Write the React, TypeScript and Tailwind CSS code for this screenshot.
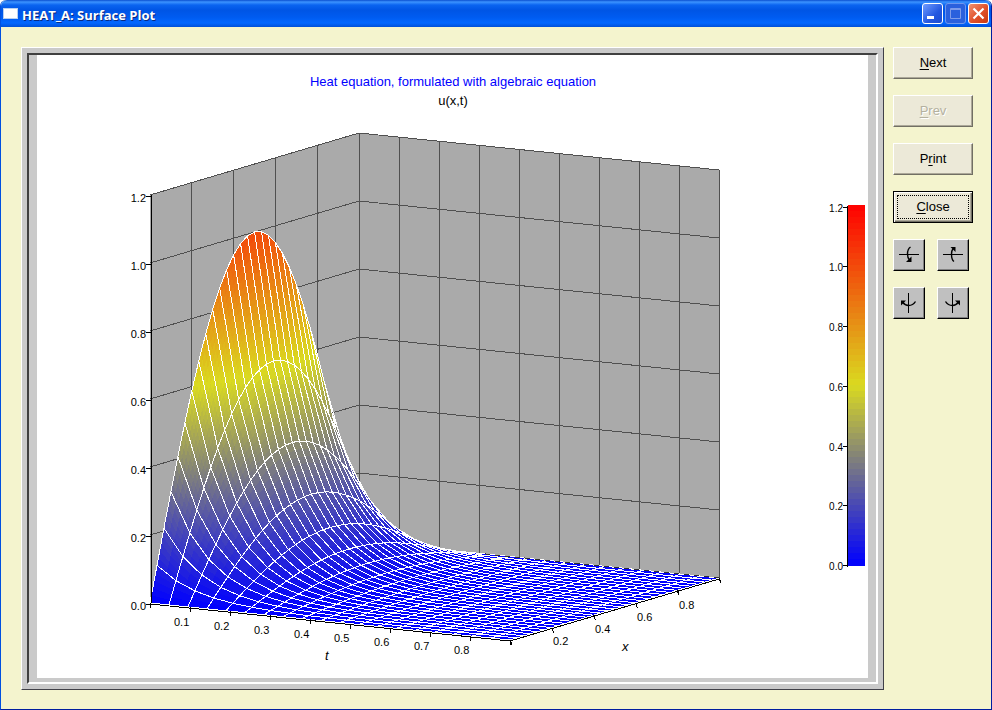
import React from "react";

type Point = [number, number];

const ORIGIN: Point = [113, 548];
const T_AXIS: Point = [360, 37];
const X_AXIS: Point = [209, -62];
const UNIT_HEIGHT = 340;
const Z_MAX = 1.2;
const T_MAX = 0.9;
const T_STEPS = 19;
const X_STEPS = 30;

const BLUE = [0, 0, 255];
const YELLOW = [218, 218, 32];
const RED = [255, 0, 0];

function project(t: number, x: number, z: number): Point {
  return [
    ORIGIN[0] + T_AXIS[0] * t + X_AXIS[0] * x,
    ORIGIN[1] + T_AXIS[1] * t + X_AXIS[1] * x - UNIT_HEIGHT * z,
  ];
}

function heat(t: number, x: number) {
  return Math.exp(-Math.PI * Math.PI * t * T_MAX) * Math.sin(Math.PI * x);
}

function surface(t: number, x: number): Point {
  return project(t, x, heat(t, x));
}

function colour(z: number) {
  const v = Math.min(1, Math.max(0, z / Z_MAX));
  const [from, to, f] = v < 0.5 ? [BLUE, YELLOW, v * 2] : [YELLOW, RED, v * 2 - 1];
  return `rgb(${from.map((c, i) => Math.round(c + (to[i] - c) * f)).join(",")})`;
}

function pts(list: Point[]) {
  return list.map(([a, b]) => `${a.toFixed(2)},${b.toFixed(2)}`).join(" ");
}

function range(n: number) {
  return Array.from({ length: n }, (_, i) => i);
}

function Cell({ t0, t1, x0, x1 }: { t0: number; t1: number; x0: number; x1: number }) {
  const nt = Math.max(1, Math.ceil(Math.abs(heat(t0, x0) - heat(t1, x0)) * 50));
  const nx = Math.max(1, Math.ceil(Math.abs(heat(t0, x0) - heat(t0, x1)) * 40));
  return (
    <g>
      {range(nt).flatMap((i) =>
        range(nx).map((j) => {
          const a = t0 + ((t1 - t0) * i) / nt;
          const b = t0 + ((t1 - t0) * (i + 1)) / nt;
          const c = x0 + ((x1 - x0) * j) / nx;
          const d = x0 + ((x1 - x0) * (j + 1)) / nx;
          return (
            <polygon
              key={`${i}-${j}`}
              points={pts([surface(a, c), surface(b, c), surface(b, d), surface(a, d)])}
              fill={colour(heat((a + b) / 2, (c + d) / 2))}
            />
          );
        }),
      )}
      <polygon
        points={pts([surface(t0, x0), surface(t1, x0), surface(t1, x1), surface(t0, x1)])}
        fill="none"
        stroke="#fff"
      />
    </g>
  );
}

function Line({ from, to, stroke = "#505050", dash }: { from: Point; to: Point; stroke?: string; dash?: string }) {
  return <line x1={from[0]} y1={from[1]} x2={to[0]} y2={to[1]} stroke={stroke} strokeDasharray={dash} />;
}

function Walls() {
  return (
    <g>
      <polygon points={pts([project(0, 0, 0), project(0, 0, 1.2), project(0, 1, 1.2), project(0, 1, 0)])} fill="#aaaaaa" />
      <polygon points={pts([project(0, 1, 0), project(0, 1, 1.2), project(1, 1, 1.2), project(1, 1, 0)])} fill="#aaaaaa" />
      {range(5).map((i) => (
        <Line key={i} from={project(0, (i + 1) / 5, 0)} to={project(0, (i + 1) / 5, 1.2)} />
      ))}
      {range(9).map((i) => (
        <Line key={i} from={project((i + 1) / 9, 1, 0)} to={project((i + 1) / 9, 1, 1.2)} />
      ))}
      {range(7).map((i) => (
        <g key={i}>
          <Line from={project(0, 0, i / 5)} to={project(0, 1, i / 5)} />
          <Line from={project(0, 1, i / 5)} to={project(1, 1, i / 5)} />
        </g>
      ))}
    </g>
  );
}

function Axes() {
  const bottomLeft = project(0, 0, 0);
  const corner = project(1, 0, 0);
  const right = project(1, 1, 0);
  return (
    <g>
      <Line from={[bottomLeft[0], bottomLeft[1] + 1]} to={[corner[0], corner[1] + 1]} stroke="#000" />
      <Line from={[corner[0], corner[1] + 1]} to={[right[0], right[1] + 1]} stroke="#000" />
      <Line from={project(0.35, 1, 0)} to={right} stroke="#303030" dash="5 5" />
      <Line from={[bottomLeft[0] + 1, bottomLeft[1]]} to={[bottomLeft[0] + 1, bottomLeft[1] - UNIT_HEIGHT * Z_MAX]} stroke="#000" />
      {range(7).map((i) => {
        const [x, y] = project(0, 0, i / 5);
        return <Line key={i} from={[x - 4, y + 1]} to={[x + 1, y + 1]} stroke="#000" />;
      })}
      {range(10).map((i) => {
        const p = project(i / 9, 0, 0);
        return <Line key={i} from={p} to={[p[0], p[1] + 5]} stroke="#000" />;
      })}
      {range(6).map((i) => {
        const p = project(1, i / 5, 0);
        return <Line key={i} from={p} to={[p[0] + 2, p[1] + 5]} stroke="#000" />;
      })}
    </g>
  );
}

function AxisLabels() {
  return (
    <g className="text-[11px]">
      {range(7).map((i) => (
        <text key={i} x={109} y={555 - 68 * i} textAnchor="end">
          {(i / 5).toFixed(1)}
        </text>
      ))}
      {range(8).map((i) => (
        <text key={i} x={137 + 40 * i} y={571 + 4 * i}>
          {((i + 1) / 10).toFixed(1)}
        </text>
      ))}
      {range(4).map((i) => (
        <text key={i} x={516 + 42 * i} y={590 - 12 * i}>
          {((i + 1) / 5).toFixed(1)}
        </text>
      ))}
      <text x={288} y={605} className="text-[13px] italic">t</text>
      <text x={585} y={596} className="text-[13px] italic">x</text>
    </g>
  );
}

function ColourBar() {
  const bands = 60;
  return (
    <g>
      {range(bands).map((i) => (
        <rect key={i} x={811} y={150 + i * 6} width={17} height={7} fill={colour(Z_MAX * (1 - (i + 0.5) / bands))} />
      ))}
      <rect x={810} y={151} width={1} height={361} />
      {range(7).map((i) => (
        <g key={i} className="text-[10px]">
          <rect x={806} y={510 - Math.round(59.7 * i)} width={5} height={1} />
          <text x={806} y={515 - Math.round(59.7 * i)} textAnchor="end">
            {(i / 5).toFixed(1)}
          </text>
        </g>
      ))}
    </g>
  );
}

function SurfacePlot() {
  return (
    <svg
      viewBox="0 0 831 623"
      className="block h-auto w-full bg-white font-['Liberation_Sans',Arial,sans-serif]"
      role="img"
      aria-label="Surface plot of u(x,t)"
    >
      <g className="text-[13px]" textAnchor="middle">
        <text x={416} y={31} fill="#0000ff">Heat equation, formulated with algebraic equation</text>
        <text x={416} y={50}>u(x,t)</text>
      </g>
      <g shapeRendering="crispEdges">
        <Walls />
        {range(T_STEPS).map((i) =>
          range(X_STEPS).map((j) => (
            <Cell
              key={`${i}-${j}`}
              t0={i / T_STEPS}
              t1={(i + 1) / T_STEPS}
              x0={(X_STEPS - j - 1) / X_STEPS}
              x1={(X_STEPS - j) / X_STEPS}
            />
          )),
        )}
        <Axes />
      </g>
      <AxisLabels />
      <ColourBar />
    </svg>
  );
}

const raised =
  "border border-t-white border-l-white border-r-[#716f64] border-b-[#716f64] shadow-[inset_-1px_-1px_0_#aca899]";

function PushButton({ before = "", hot, after, disabled = false }: { before?: string; hot: string; after: string; disabled?: boolean }) {
  return (
    <button
      type="button"
      disabled={disabled}
      className={`h-8 w-full bg-[#ece9d8] text-[13px] text-black disabled:text-[#b4b1a0] disabled:[text-shadow:1px_1px_0_#fff] ${raised}`}
    >
      {before}
      <span className="underline underline-offset-2">{hot}</span>
      {after}
    </button>
  );
}

function RotateButton({ label, line, arc, head }: { label: string; line: string; arc: string; head: string }) {
  return (
    <button
      type="button"
      aria-label={label}
      className="size-8 border border-t-white border-l-white border-r-black border-b-black bg-[#c0c0c0] shadow-[inset_-1px_-1px_0_#808080]"
    >
      <svg viewBox="1 1 30 30" className="block size-full" fill="none" stroke="#000">
        <path d={line} shapeRendering="crispEdges" />
        <path d={arc} strokeWidth="1.4" />
        <path d={head} fill="#000" stroke="none" />
      </svg>
    </button>
  );
}

const caption = "size-[21px] rounded-[3px] border";

function TitleBar() {
  return (
    <header className="flex h-[27px] items-center rounded-t-md bg-[linear-gradient(#0a4fd0_0,#3c93ff_2px,#0a64f0_5px,#0055e5_10px,#005bf0_17px,#0267ff_23px,#0050d8_27px)] pr-0.5 pl-0.5">
      <span className="h-[11px] w-[15px] border border-[#b8d0f0] bg-white" />
      <h1 className="ml-1 pt-0.5 font-['Open_Sans','Noto_Sans',sans-serif] text-[13px] leading-5 font-bold text-white [text-shadow:1px_1px_0_#0a2a80]">
        HEAT_A: Surface Plot
      </h1>
      <div className="ml-auto flex gap-0.5">
        <button type="button" aria-label="Minimize" className={`${caption} border-white bg-[linear-gradient(135deg,#6f9bff,#2458e0_60%,#1b4bd0)]`}>
          <svg viewBox="0 0 19 19" className="block size-full">
            <rect x="4" y="12" width="7" height="3" fill="#fff" />
          </svg>
        </button>
        <button type="button" aria-label="Maximize" disabled className={`${caption} border-[#6f97ee] bg-[#2a60dd]`}>
          <svg viewBox="0 0 19 19" className="block size-full" fill="none" stroke="#7d9bea">
            <path d="M4.5 4.5h10v10h-10z M4 5.5h11" />
          </svg>
        </button>
        <button type="button" aria-label="Close window" className={`${caption} border-white bg-[linear-gradient(135deg,#f0906f,#e0502a_55%,#c8380f)]`}>
          <svg viewBox="0 0 19 19" className="block size-full" stroke="#fff" strokeWidth="2.2">
            <path d="M4.5 4.5l10 10M14.5 4.5l-10 10" />
          </svg>
        </button>
      </div>
    </header>
  );
}

export default function App() {
  return (
    <div className="min-h-screen bg-white">
      <main className="flex min-h-screen flex-col rounded-t-md border-r border-b border-l border-r-[#001ea0] border-b-[#001ea0] border-l-[#0050e0] bg-[#f4f4ce] font-['Liberation_Sans',Arial,sans-serif]">
        <TitleBar />
        <div className="flex items-start gap-[9px] pt-5 pr-[18px] pb-4 pl-5">
          <section className="min-w-0 flex-1 border border-t-white border-r-[#404048] border-b-[#404048] border-l-white">
            <div className="border-5 border-[#cacaca]">
              <div className="border-2 border-t-[#404040] border-r-white border-b-white border-l-[#404040]">
                <div className="bg-[#cacaca] px-2 pb-1">
                  <SurfacePlot />
                </div>
              </div>
            </div>
          </section>
          <aside className="flex w-20 flex-col gap-4">
            <PushButton hot="N" after="ext" />
            <PushButton hot="P" after="rev" disabled />
            <PushButton before="P" hot="r" after="int" />
            <button type="button" className="h-8 w-full border border-black bg-[#ece9d8] p-px text-[13px] shadow-[inset_1px_1px_0_#fff,inset_-1px_-1px_0_#716f64,inset_-2px_-2px_0_#aca899]">
              <span className="m-0.5 flex h-6 items-center justify-center border border-dotted border-black">
                <span className="underline underline-offset-2">C</span>lose
              </span>
            </button>
            <div className="grid grid-cols-[32px_32px] gap-x-3 gap-y-4">
              <RotateButton label="Tilt down" line="M6 15.5h20" arc="M17.5 8Q14.5 10 14.5 15Q14.5 19 16.5 21" head="M13 23h5.5v-5.5z" />
              <RotateButton label="Tilt up" line="M6 15.5h20" arc="M17 22.5Q14.5 21 14.5 15Q14.5 11 16.5 9.5" head="M13.5 8h5v5z" />
              <RotateButton label="Turn left" line="M15.5 6v20" arc="M9.5 15Q12 18.5 15.5 18.5Q20 18.5 22.5 14.5" head="M8 13.5h5l-5 5z" />
              <RotateButton label="Turn right" line="M15.5 6v20" arc="M21.5 15Q19 18.5 15.5 18.5Q11 18.5 8.5 14.5" head="M23 13.5h-5l5 5z" />
            </div>
          </aside>
        </div>
      </main>
    </div>
  );
}
